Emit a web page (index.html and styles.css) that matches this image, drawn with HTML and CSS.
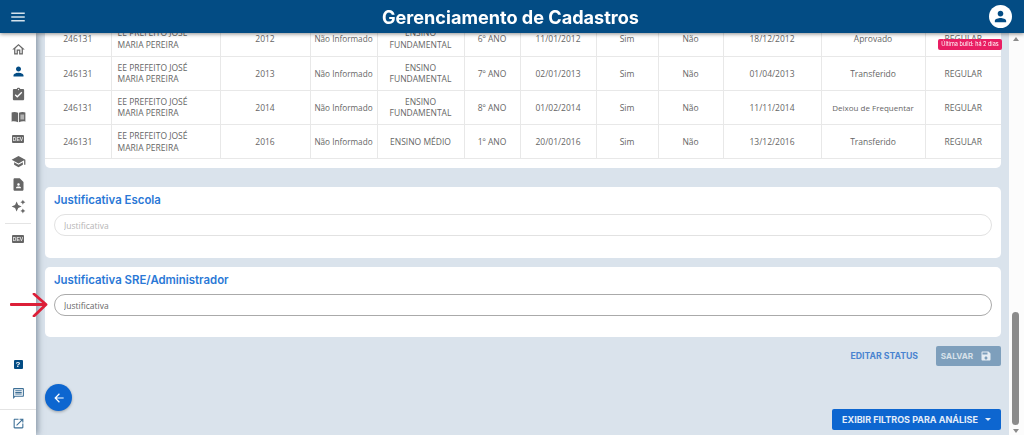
FILE: index.html
```html
<!DOCTYPE html>
<html lang="pt-BR">

<head>
    <meta charset="UTF-8">
    <meta name="viewport" content="width=device-width, initial-scale=1.0">
    <title>Gerenciamento de Cadastros</title>
    <link rel="stylesheet" href="styles.css">
</head>

<body>
    <header class="topbar">
        <button class="menu-btn" type="button">
            <svg viewBox="0 0 24 24" width="18" height="18"><path d="M3 18h18v-2H3v2zm0-5h18v-2H3v2zm0-7v2h18V6H3z"/></svg>
        </button>
        <h1>Gerenciamento de Cadastros</h1>
        <div class="avatar">
            <svg viewBox="0 0 24 24" width="17" height="17"><path d="M12 12c2.21 0 4-1.79 4-4s-1.79-4-4-4-4 1.79-4 4 1.79 4 4 4zm0 2c-2.67 0-8 1.34-8 4v2h16v-2c0-2.66-5.33-4-8-4z"/></svg>
        </div>
    </header>

    <div class="layout">
        <nav class="sidebar">
            <a class="nav-item"><svg viewBox="0 0 24 24"><path d="M12 3L2 12h3v8h6v-6h2v6h6v-8h3L12 3zm0 2.7l5 4.5V18h-2v-6H9v6H7v-7.8l5-4.5z"/></svg></a>
            <a class="nav-item active"><svg viewBox="0 0 24 24"><path d="M12 12c2.21 0 4-1.79 4-4s-1.79-4-4-4-4 1.79-4 4 1.79 4 4 4zm0 2c-2.67 0-8 1.34-8 4v2h16v-2c0-2.66-5.33-4-8-4z"/></svg></a>
            <a class="nav-item"><svg viewBox="0 0 24 24"><path d="M19 3h-4.18C14.4 1.84 13.3 1 12 1c-1.3 0-2.4.84-2.82 2H5c-1.1 0-2 .9-2 2v14c0 1.1.9 2 2 2h14c1.1 0 2-.9 2-2V5c0-1.1-.9-2-2-2zm-7 0c.55 0 1 .45 1 1s-.45 1-1 1-1-.45-1-1 .45-1 1-1zm-2 14l-4-4 1.41-1.41L10 14.17l6.59-6.59L18 9l-8 8z"/></svg></a>
            <a class="nav-item"><svg viewBox="0 0 24 24"><path d="M1 5.5C3 4.6 8 4.2 11.3 6v15C8 19.6 3 19.4 1 20.2zM12.7 6C16 4.2 21 4.6 23 5.5v14.7c-2-.8-7-.6-10.3.8zM15 9v1.5h6V9zm0 3v1.5h6V12zm0 3v1.5h6V15z"/></svg></a>
            <a class="nav-item"><span class="dev-tag">DEV</span></a>
            <a class="nav-item"><svg viewBox="0 0 24 24"><path d="M5 13.18v4L12 21l7-3.82v-4L12 17l-7-3.82zM12 3L1 9l11 6 9-4.91V17h2V9L12 3z"/></svg></a>
            <a class="nav-item"><svg viewBox="0 0 24 24"><path d="M14 2H6c-1.1 0-2 .9-2 2v16c0 1.1.9 2 2 2h12c1.1 0 2-.9 2-2V8l-6-6zm-2 8c1.1 0 2 .9 2 2s-.9 2-2 2-2-.9-2-2 .9-2 2-2zm4 8H8v-.57c0-.81.48-1.53 1.22-1.85.85-.37 1.79-.58 2.78-.58s1.93.21 2.78.58c.74.32 1.22 1.04 1.22 1.85V18z"/></svg></a>
            <a class="nav-item"><svg viewBox="0 0 24 24"><path d="M19 9l1.25-2.75L23 5l-2.75-1.25L19 1l-1.25 2.75L15 5l2.75 1.25L19 9zm-7.5.5L9 4 6.5 9.5 1 12l5.5 2.5L9 20l2.5-5.5L17 12l-5.5-2.5zM19 15l-1.25 2.75L15 19l2.75 1.25L19 23l1.25-2.75L23 19l-2.75-1.25L19 15z"/></svg></a>
            <hr class="nav-divider">
            <a class="nav-item"><span class="dev-tag">DEV</span></a>

            <a class="nav-item nav-bottom help"><span class="help-tag">?</span></a>
            <a class="nav-item feedback"><svg viewBox="0 0 24 24"><path d="M20 2H4c-1.1 0-2 .9-2 2v18l4-4h14c1.1 0 2-.9 2-2V4c0-1.1-.9-2-2-2zm0 14H5.17L4 17.17V4h16v12zM6 12h12v2H6zm0-3h12v2H6zm0-3h12v2H6z"/></svg></a>
            <hr class="nav-divider wide">
            <a class="nav-item feedback"><svg viewBox="0 0 24 24"><path d="M19 19H5V5h7V3H5c-1.11 0-2 .9-2 2v14c0 1.1.89 2 2 2h14c1.1 0 2-.9 2-2v-7h-2v7zM14 3v2h3.59l-9.83 9.83 1.41 1.41L19 6.41V10h2V3h-7z"/></svg></a>
        </nav>

        <main class="content">
            <section class="card table-card">
                <table class="history">
                    <colgroup>
                        <col class="c-inep"><col class="c-school"><col class="c-year"><col class="c-shift">
                        <col class="c-level"><col class="c-grade"><col class="c-date"><col class="c-flag">
                        <col class="c-flag2"><col class="c-date2"><col class="c-result"><col class="c-status">
                    </colgroup>
                    <tbody>
                        <tr>
                            <td>246131</td><td class="left">EE PREFEITO JOSÉ MARIA PEREIRA</td><td>2012</td><td class="shift">Não Informado</td>
                            <td>ENSINO FUNDAMENTAL</td><td>6º ANO</td><td>11/01/2012</td><td>Sim</td><td>Não</td>
                            <td>18/12/2012</td><td>Aprovado</td><td>REGULAR</td>
                        </tr>
                        <tr>
                            <td>246131</td><td class="left">EE PREFEITO JOSÉ MARIA PEREIRA</td><td>2013</td><td class="shift">Não Informado</td>
                            <td>ENSINO FUNDAMENTAL</td><td>7º ANO</td><td>02/01/2013</td><td>Sim</td><td>Não</td>
                            <td>01/04/2013</td><td>Transferido</td><td>REGULAR</td>
                        </tr>
                        <tr>
                            <td>246131</td><td class="left">EE PREFEITO JOSÉ MARIA PEREIRA</td><td>2014</td><td class="shift">Não Informado</td>
                            <td>ENSINO FUNDAMENTAL</td><td>8º ANO</td><td>01/02/2014</td><td>Sim</td><td>Não</td>
                            <td>11/11/2014</td><td class="result-long">Deixou de Frequentar</td><td>REGULAR</td>
                        </tr>
                        <tr>
                            <td>246131</td><td class="left">EE PREFEITO JOSÉ MARIA PEREIRA</td><td>2016</td><td class="shift">Não Informado</td>
                            <td>ENSINO MÉDIO</td><td>1º ANO</td><td>20/01/2016</td><td>Sim</td><td>Não</td>
                            <td>13/12/2016</td><td>Transferido</td><td>REGULAR</td>
                        </tr>
                    </tbody>
                </table>
            </section>

            <section class="card note-card first">
                <h2>Justificativa Escola</h2>
                <input class="pill-input" type="text" placeholder="Justificativa" disabled>
            </section>

            <section class="card note-card">
                <h2>Justificativa SRE/Administrador</h2>
                <input class="pill-input filled" type="text" value="Justificativa">
            </section>

            <div class="actions">
                <button class="btn-link" type="button">EDITAR STATUS</button>
                <button class="btn-save" type="button">SALVAR
                    <svg viewBox="0 0 24 24" width="13" height="13"><path d="M17 3H5c-1.11 0-2 .9-2 2v14c0 1.1.89 2 2 2h14c1.1 0 2-.9 2-2V7l-4-4zm-5 16c-1.66 0-3-1.34-3-3s1.34-3 3-3 3 1.34 3 3-1.34 3-3 3zm3-10H5V5h10v4z"/></svg>
                </button>
            </div>
        </main>

        <div class="scrollbar">
            <span class="arrow up"></span>
            <span class="thumb"></span>
            <span class="arrow down"></span>
        </div>
    </div>

    <!-- itens flutuantes -->
    <span class="build-badge">Última build: há 2 dias</span>

    <button class="fab-back" type="button">
        <svg viewBox="0 0 24 24" width="14" height="14"><path d="M20 11H7.83l5.59-5.59L12 4l-8 8 8 8 1.41-1.41L7.83 13H20v-2z"/></svg>
    </button>

    <button class="btn-filters" type="button">EXIBIR FILTROS PARA ANÁLISE <span class="caret"></span></button>

    <svg class="red-arrow" viewBox="0 0 40 24" width="40" height="24">
        <path d="M1 11.5H35M24 1L36 11.5L24 23" fill="none" stroke="#dc1f38" stroke-width="2.8" stroke-linecap="round" stroke-linejoin="round"/>
    </svg>
</body>

</html>
```

FILE: styles.css
```css
* {
    box-sizing: border-box;
}

html,
body {
    height: 100%;
}

body {
    margin: 0;
    display: flex;
    flex-direction: column;
    overflow: hidden;
    font-family: "Open Sans", Arial, sans-serif;
    background-color: #dae3ec;
    color: #666;
}

button {
    border: none;
    cursor: pointer;
    font-family: Inter, Arial, sans-serif;
}

/* Barra superior */
.topbar {
    position: relative;
    z-index: 3;
    flex: 0 0 33px;
    display: flex;
    align-items: center;
    justify-content: space-between;
    padding: 0 12px 0 9px;
    background-color: #034c84;
    box-shadow: 0 1px 4px rgba(0, 0, 0, 0.45);
}

.topbar h1 {
    margin: 0 0 0 5px;
    font-family: Inter, Arial, sans-serif;
    font-size: 18.1px;
    font-weight: 700;
    color: #fff;
}

.menu-btn {
    display: flex;
    padding: 0;
    background: none;
}

.menu-btn svg {
    fill: #d5e2ec;
}

.avatar {
    display: flex;
    align-items: center;
    justify-content: center;
    width: 23px;
    height: 23px;
    border-radius: 50%;
    background-color: #fff;
}

.avatar svg {
    fill: #034c84;
}

.layout {
    flex: 1;
    display: flex;
    min-height: 0;
}

/* Menu lateral */
.sidebar {
    position: relative;
    z-index: 2;
    flex: 0 0 36px;
    display: flex;
    flex-direction: column;
    align-items: center;
    padding-top: 5px;
    background-color: #fff;
    box-shadow: 2px 0 6px rgba(70, 90, 110, 0.55);
}

.nav-item {
    flex: 0 0 22.5px;
    display: flex;
    align-items: center;
    justify-content: center;
    width: 100%;
}

.nav-item svg {
    width: 15px;
    height: 15px;
    fill: #666;
}

.nav-item.active svg {
    fill: #034c84;
}

.nav-item.feedback svg {
    width: 13px;
    height: 13px;
    fill: #3d6f96;
}

.nav-bottom {
    margin-top: auto;
    margin-bottom: 6.5px;
}

.nav-divider {
    flex: none;
    width: 26px;
    margin: 5px 0 4px;
    border: none;
    border-top: 1px solid #e4e4e4;
}

.nav-divider.wide {
    width: 100%;
    margin: 4px 0 3px;
}

.dev-tag {
    display: block;
    width: 12px;
    height: 8px;
    border-radius: 1px;
    background-color: #666;
    color: #e6e6e6;
    font-family: "Liberation Sans", Arial, sans-serif;
    font-size: 5px;
    font-weight: 700;
    line-height: 8px;
    text-align: center;
}

.help-tag {
    display: block;
    width: 9px;
    height: 9px;
    border-radius: 1px;
    background-color: #034c84;
    color: #fff;
    font-family: "Liberation Sans", Arial, sans-serif;
    font-size: 8px;
    font-weight: 700;
    line-height: 9px;
    text-align: center;
}

/* Conteudo */
.content {
    flex: 1;
    min-width: 0;
    overflow: hidden;
    padding: 0 8px 0 9px;
}

.card {
    background-color: #fff;
    border-radius: 5px;
}

.table-card {
    margin-top: -11px;
    padding-bottom: 9px;
}

.history {
    width: 100%;
    table-layout: fixed;
    border-collapse: collapse;
    font-size: 8.5px;
    line-height: 11.5px;
}

.history tr {
    height: 34.2px;
    border-bottom: 1px solid #e8e8e8;
}

.history td {
    padding: 0 6px;
    border-right: 1px solid #e8e8e8;
    text-align: center;
}

.history td:last-child {
    border-right: none;
}

.history td.left {
    text-align: left;
}

.history td.shift {
    padding: 0;
    font-size: 8.2px;
    white-space: nowrap;
}

.history td.result-long {
    padding: 0;
    font-size: 8px;
    white-space: nowrap;
}

.c-inep { width: 66px; }
.c-school { width: 109px; }
.c-year { width: 90px; }
.c-shift { width: 67px; }
.c-level { width: 87px; }
.c-grade { width: 56px; }
.c-date { width: 76px; }
.c-flag { width: 62px; }
.c-flag2 { width: 65px; }
.c-date2 { width: 98px; }
.c-result { width: 104px; }
.c-status { width: 76px; }

.note-card {
    margin-top: 9px;
    padding: 6px 9px 21px;
}

.note-card.first {
    margin-top: 19px;
    padding-bottom: 22px;
}

.note-card h2 {
    margin: 0 0 6px;
    font-family: Inter, Arial, sans-serif;
    font-size: 11.4px;
    font-weight: 600;
    line-height: 15px;
    color: #2a78d6;
}

.pill-input {
    display: block;
    width: 100%;
    height: 22px;
    padding: 0 9px;
    border: 1px solid #e2e2e2;
    border-radius: 11px;
    background-color: #fff;
    font-family: "Open Sans", Arial, sans-serif;
    font-size: 8.5px;
    color: #666;
}

.pill-input::placeholder {
    color: #b5b5b5;
    opacity: 1;
}

.pill-input.filled {
    border-color: #aaa;
}

.actions {
    display: flex;
    align-items: center;
    justify-content: flex-end;
    gap: 18px;
    margin-top: 9px;
}

.btn-link {
    padding: 0;
    background: none;
    color: #4a84d0;
    font-size: 8.7px;
    font-weight: 700;
}

.btn-save {
    display: flex;
    align-items: center;
    justify-content: center;
    gap: 7px;
    width: 65px;
    height: 20px;
    padding-left: 2px;
    border-radius: 2px;
    background-color: #7e9fbc;
    color: #d7e1ea;
    font-size: 8.2px;
    font-weight: 700;
}

.btn-save svg {
    width: 12px;
    height: 12px;
    fill: #e6edf3;
}

/* Barra de rolagem desenhada */
.scrollbar {
    flex: 0 0 15px;
    position: relative;
    background-color: #fcfcfc;
}

.thumb {
    position: absolute;
    top: 279px;
    left: 3px;
    width: 7px;
    height: 113px;
    border-radius: 4px;
    background-color: #8b8b8b;
}

.arrow {
    position: absolute;
    left: 4px;
    border-left: 3px solid transparent;
    border-right: 3px solid transparent;
}

.arrow.up {
    top: 4px;
    border-bottom: 4px solid #8b8b8b;
}

.arrow.down {
    bottom: 2px;
    border-top: 4px solid #8b8b8b;
}

/* Flutuantes */
.build-badge {
    position: fixed;
    z-index: 1;
    top: 39px;
    left: 938px;
    width: 64px;
    height: 11px;
    border-radius: 2px;
    background-color: #e91e63;
    color: #fff;
    font-family: Inter, Arial, sans-serif;
    font-size: 5.5px;
    line-height: 11px;
    text-align: center;
    white-space: nowrap;
}

.fab-back {
    position: fixed;
    z-index: 1;
    top: 384px;
    left: 45px;
    display: flex;
    align-items: center;
    justify-content: center;
    width: 27px;
    height: 27px;
    padding: 0;
    border-radius: 50%;
    background-color: #0d66d0;
    box-shadow: 0 1px 3px rgba(0, 0, 0, 0.3);
}

.fab-back svg {
    fill: #fff;
}

.btn-filters {
    position: fixed;
    z-index: 1;
    top: 409px;
    left: 832px;
    display: flex;
    align-items: center;
    justify-content: center;
    gap: 7px;
    width: 169px;
    height: 21px;
    padding: 0;
    border-radius: 2px;
    background-color: #0d66d0;
    color: #e3edf9;
    font-size: 9px;
    font-weight: 700;
}

.caret {
    border-left: 3px solid transparent;
    border-right: 3px solid transparent;
    border-top: 3px solid #e3edf9;
}

.red-arrow {
    position: fixed;
    z-index: 4;
    top: 293px;
    left: 10px;
}
```
